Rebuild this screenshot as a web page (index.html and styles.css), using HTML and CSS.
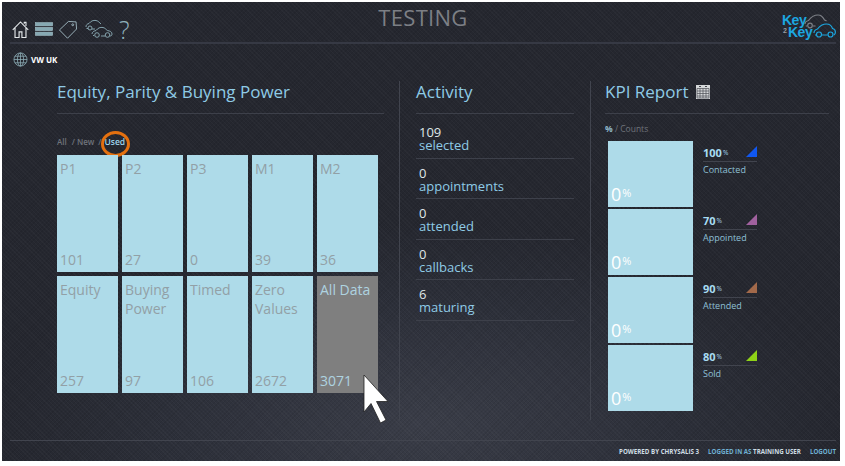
FILE: index.html
```html
<!DOCTYPE html>
<html lang="en">
<head>
<meta charset="utf-8">
<title>Testing</title>
<link rel="stylesheet" href="styles.css">
</head>
<body>
<div class="app">
  <header class="topbar">
    <nav class="nav">
      <svg class="ic-home" viewBox="0 0 18 20" fill="none" stroke="#e4e8ea" stroke-width="1.2"><path d="M.8 10.500 9 2l8.200 8.500M3.200 8.500v10h4.300v-6h3v6h4.300v-10M13 4V2.500h1.800v3.700"/></svg>
      <svg class="ic-list" viewBox="0 0 18 14" fill="#86a9b3" stroke="#a7c3cb" stroke-width=".5"><rect x=".3" y=".5" width="17.400" height="3.400"/><rect x=".3" y="5.300" width="17.400" height="3.400"/><rect x=".3" y="10.100" width="17.400" height="3.400"/></svg>
      <svg class="ic-tag" viewBox="0 0 20 20" fill="none" stroke="#a9c3cc" stroke-width=".9"><path d="M1 10.500 10.500 1.500l8 .5.5 7.500L9.500 19.200z"/><circle cx="15" cy="5" r="1"/></svg>
      <svg class="ic-cars" viewBox="0 0 28 20" fill="none" stroke="#8fb0ba" stroke-width=".9"><path d="M1 8c0-2 1-3 3-3.500C6 2 8 1 11 1.500c2 .3 3.500 2 5 3.500M3 9.500H1.500M7 10h3"/><circle cx="5" cy="9" r="2"/><path d="M7 15c0-2 2-3 4-3.500 2-2.500 4-3.500 7-3 2 .4 3 2 4.500 3 2.500.5 4.500 1.500 4.500 3.500 0 1.500-1 2-2 2M9 16.500H8M16 17h4"/><circle cx="12" cy="16" r="2.300"/><circle cx="22.500" cy="16" r="2.300"/></svg>
      <span class="ic-help">?</span>
    </nav>
    <h1 class="app-title">TESTING</h1>
    <div class="logo">
      <span class="logo-word">Key</span>
      <span class="logo-two">2</span>
      <span class="logo-word logo-second">Key</span>
      <svg class="logo-cars" viewBox="0 0 32 24" fill="none" stroke-width="1.200">
        <path stroke="#7d8087" d="M1 10c0-2 1.500-3 3.500-3.500C7 3 10 1 14 1c3 0 5 2 6.500 5 .8.300 1.500.6 2 1M3 12H1.800M9 12h2.500"/><circle stroke="#7d8087" cx="6" cy="11.500" r="2.300"/>
        <path stroke="#1ca7e0" d="M10 19c0-2.500 1.500-3.500 3.500-4 2.500-3.500 5-5 9-5 3 0 5 1.500 6 4.500 1.800.5 2.900 1.800 2.900 3.500 0 1.500-.5 2.500-1.500 3M12 21h-1M18 21h5.500"/><circle stroke="#1ca7e0" cx="15" cy="20.500" r="2.500"/><circle stroke="#1ca7e0" cx="26.500" cy="20.500" r="2.500"/>
      </svg>
    </div>
  </header>

  <div class="dealer">
    <svg class="globe" viewBox="0 0 16 16" fill="none" stroke="#8fb0ba" stroke-width=".8"><circle cx="8" cy="8" r="7"/><ellipse cx="8" cy="8" rx="3.300" ry="7"/><path d="M8 1v14M1 8h14M2 4.500h12M2 11.500h12"/></svg>
    <span>VW UK</span>
  </div>

  <main class="columns">
    <section class="col col-equity">
      <h2 class="heading">Equity, Parity &amp; Buying Power</h2>
      <div class="filter">
        <span class="dim">All</span><span class="dim sep">/ New</span><span class="dim sep2">/</span><span class="on">Used</span>
        <span class="ring"></span>
      </div>
      <div class="tiles">
        <div class="tile"><span>P1</span><span>101</span></div>
        <div class="tile"><span>P2</span><span>27</span></div>
        <div class="tile"><span>P3</span><span>0</span></div>
        <div class="tile"><span>M1</span><span>39</span></div>
        <div class="tile"><span>M2</span><span>36</span></div>
        <div class="tile"><span>Equity</span><span>257</span></div>
        <div class="tile"><span>Buying Power</span><span>97</span></div>
        <div class="tile"><span>Timed</span><span>106</span></div>
        <div class="tile"><span>Zero Values</span><span>2672</span></div>
        <div class="tile tile-active"><span>All Data</span><span>3071</span>
          <svg class="cursor" viewBox="0 0 26 50"><path d="M1 1v37l7-8.500 9.500 19.500 5.500-3-9.500-18.500H25z" fill="#fff" stroke="#222" stroke-width=".8"/></svg>
        </div>
      </div>
    </section>

    <section class="col col-activity">
      <h2 class="heading">Activity</h2>
      <ul class="activity">
        <li><b>109</b><span>selected</span></li>
        <li><b>0</b><span>appointments</span></li>
        <li><b>0</b><span>attended</span></li>
        <li><b>0</b><span>callbacks</span></li>
        <li><b>6</b><span>maturing</span></li>
      </ul>
    </section>

    <section class="col col-kpi">
      <h2 class="heading">KPI Report
        <svg class="calc" viewBox="0 0 14 14"><rect width="14" height="14" fill="#d6d8da"/><path d="M1 3.500h12v9.500H1zM4 3.500V13M7 3.500V13M10 3.500V13M1 6h12M1 8.500h12M1 11h12" fill="none" stroke="#4c4f55" stroke-width=".7"/><path d="M3 1.500h2M9 1.500h2" stroke="#44474d"/></svg>
      </h2>
      <div class="kpi-mode"><b>%</b> / Counts</div>
      <div class="kpis">
        <div class="kpi">
          <div class="kpi-tile">0<small>%</small></div>
          <div class="kpi-stat"><div class="kpi-val"><b>100</b><small>%</small><i class="tri tri-blue"></i></div><div class="kpi-name">Contacted</div></div>
        </div>
        <div class="kpi">
          <div class="kpi-tile">0<small>%</small></div>
          <div class="kpi-stat"><div class="kpi-val"><b>70</b><small>%</small><i class="tri tri-purple"></i></div><div class="kpi-name">Appointed</div></div>
        </div>
        <div class="kpi">
          <div class="kpi-tile">0<small>%</small></div>
          <div class="kpi-stat"><div class="kpi-val"><b>90</b><small>%</small><i class="tri tri-brown"></i></div><div class="kpi-name">Attended</div></div>
        </div>
        <div class="kpi">
          <div class="kpi-tile">0<small>%</small></div>
          <div class="kpi-stat"><div class="kpi-val"><b>80</b><small>%</small><i class="tri tri-green"></i></div><div class="kpi-name">Sold</div></div>
        </div>
      </div>
    </section>
  </main>

  <footer class="footer">
    <span class="pale">POWERED BY CHRYSALIS 3</span>
    <span><em>LOGGED IN AS</em> <span class="pale">TRAINING USER</span></span>
    <em>LOGOUT</em>
  </footer>
</div>
</body>
</html>
```

FILE: styles.css
```css
* { box-sizing: border-box; }
html, body { margin: 0; height: 100%; background: #fff; }
body { padding: 2px 5px 5px 2px; font-family: "Open Sans", "Liberation Sans", sans-serif; overflow: hidden; }

.app {
  width: 838px;
  height: 459px;
  display: flex;
  flex-direction: column;
  padding: 0 4px 0 8px;
  color: #fff;
  background:
    repeating-linear-gradient(45deg, rgba(255,255,255,.025) 0 1px, transparent 1px 3px),
    repeating-linear-gradient(-45deg, rgba(0,0,0,.07) 0 1px, transparent 1px 3px),
    radial-gradient(ellipse 420px 200px at 50% 92%, #3a3d48 0%, #2c2f39 60%, #25272f 100%),
    #25272f;
}

/* top bar */
.topbar {
  height: 42px;
  flex: none;
  display: grid;
  grid-template-columns: 1fr auto 1fr;
  align-items: end;
  border-bottom: 2px solid #363944;
}
.nav { display: flex; align-items: center; height: 22px; margin-bottom: 2px; padding-left: 2px; }
.ic-home { width: 17px; height: 19px; margin-right: 6px; }
.ic-list { width: 18px; height: 14px; margin-right: 5px; }
.ic-tag { width: 20px; height: 19px; margin-right: 7px; }
.ic-cars { width: 28px; height: 20px; margin-right: 6px; }
.ic-help { font-size: 25px; line-height: 22px; font-weight: 300; color: #8fb0ba; }
.app-title {
  margin: 0 0 11px;
  font-size: 22px;
  line-height: 28px;
  font-weight: 400;
  letter-spacing: .3px;
  color: #7c7f85;
}
.logo {
  position: relative;
  justify-self: end;
  width: 54px;
  height: 26px;
  margin-bottom: 3px;
  line-height: 1;
  color: #1ca7e0;
  font-family: "Liberation Sans", sans-serif;
  font-weight: 700;
}
.logo-word { position: absolute; left: 0; top: 0; font-size: 14px; letter-spacing: -.5px; }
.logo-second { left: 6px; top: 12px; }
.logo-two { position: absolute; left: 1px; top: 14px; font-size: 7px; color: #9a9da2; }
.logo-cars { position: absolute; right: 0; top: 1px; width: 32px; height: 24px; }

/* dealer row */
.dealer {
  flex: none;
  display: flex;
  align-items: center;
  gap: 3px;
  height: 14px;
  margin-top: 8px;
  padding-left: 3px;
  font-size: 8px;
  font-weight: 700;
}
.globe { width: 15px; height: 15px; flex: none; }

/* columns */
.columns { flex: 1; display: flex; padding: 15px 0 0 47px; }
.col { height: 339px; }
.col-equity { width: 343px; border-right: 1px solid #41444e; }
.col-activity { width: 191px; padding: 0 16px 0 16px; border-right: 1px solid #41444e; }
.col-kpi { flex: 1; padding-left: 14px; }
.heading {
  margin: 0 15px 0 0;
  height: 33px;
  font-size: 17px;
  line-height: 22px;
  font-weight: 400;
  color: #8fcbe6;
  border-bottom: 1px solid #3d404a;
  white-space: nowrap;
}
.col-activity .heading { margin-right: 0; }
.col-kpi .heading { margin-right: 7px; }
.calc { width: 14px; height: 14px; margin-left: 3px; vertical-align: -1px; }

.filter {
  position: relative;
  display: flex;
  align-items: center;
  height: 16px;
  margin: 19px 0 6px;
  font-size: 8px;
  font-weight: 600;
}
.dim { color: #6f737b; }
.sep { margin-left: 5px; }
.sep2 { margin-left: 4px; }
.on { margin-left: 3px; color: #9fd5ec; font-size: 8.500px; }
.ring {
  position: absolute;
  left: 44px;
  top: -2px;
  width: 29px;
  height: 26px;
  border: 3px solid #e4700f;
  border-radius: 50%;
}
.tiles {
  display: grid;
  grid-template-columns: repeat(5, 61px);
  grid-auto-rows: 117px;
  gap: 4px;
  width: 321px;
}
.tile {
  position: relative;
  display: flex;
  flex-direction: column;
  justify-content: space-between;
  padding: 4px 3px 3px;
  background: #aedbe9;
  color: #92a0a6;
  font-size: 14px;
  line-height: 19px;
}
.tile-active { background: #7f7f7f; color: #aed3e0; }
.cursor { position: absolute; left: 46px; top: 98px; width: 26px; height: 50px; }

/* activity */
.activity { list-style: none; margin: 4px 0 0; padding: 0; }
.activity li {
  height: 40.500px;
  padding: 8px 0 0 3px;
  display: flex;
  flex-direction: column;
  font-size: 13px;
  line-height: 13px;
  border-bottom: 1px solid #3d404a;
}
.activity b { font-weight: 400; color: #dfe6e8; }
.activity span { color: #8fcbe6; }

/* KPI */
.kpi-mode { margin-top: 9px; height: 12px; font-size: 8.500px; line-height: 12px; color: #6f737b; }
.kpi-mode b { color: #8fb7c9; }
.kpis { display: flex; flex-direction: column; gap: 2px; margin-top: 6px; padding-left: 3px; }
.kpi { display: flex; gap: 10px; height: 66px; }
.kpi-tile {
  width: 85px;
  padding: 41px 0 0 3px;
  background: #aedbe9;
  font-size: 18px;
  line-height: 22px;
  color: #fff;
}
.kpi-tile small { font-size: 11px; vertical-align: 4px; margin-left: 1px; }
.kpi-stat { width: 54px; padding-top: 4px; }
.kpi-val {
  position: relative;
  height: 17px;
  font-size: 11px;
  line-height: 15px;
  color: #a8dcf2;
  border-bottom: 1px solid #41444e;
}
.kpi-val b { font-weight: 700; }
.kpi-val small { font-size: 6.500px; vertical-align: 2px; margin-left: 1px; }
.tri {
  position: absolute;
  right: 0;
  top: 1px;
  width: 11px;
  height: 11px;
  clip-path: polygon(100% 0, 100% 100%, 0 100%);
}
.tri-blue { background: #1057f0; }
.tri-purple { background: #a0619e; }
.tri-brown { background: #a2694a; }
.tri-green { background: #8fd317; }
.kpi-name { margin-top: 2px; font-size: 9px; line-height: 12px; color: #8fc0d6; }

/* footer */
.footer {
  flex: none;
  height: 21px;
  display: flex;
  justify-content: flex-end;
  align-items: center;
  gap: 9px;
  border-top: 1px solid #41444e;
  font-size: 6.200px;
  font-weight: 700;
}
.pale { color: #cfdde3; }
.footer em { font-style: normal; color: #6fb0d2; }
```
